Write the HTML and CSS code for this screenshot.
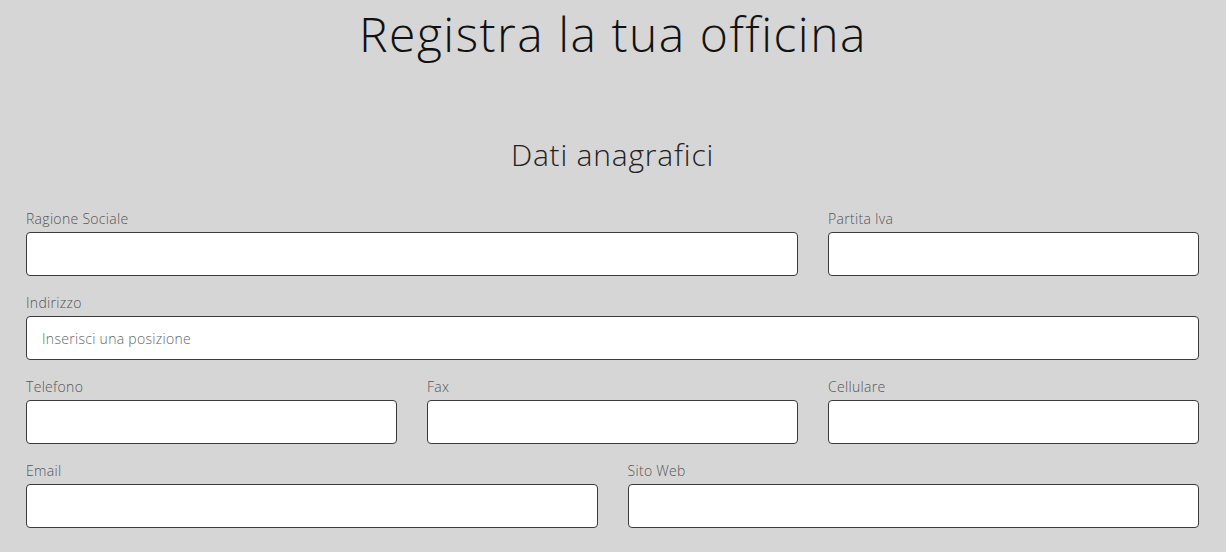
FILE: index.html
```html
<!DOCTYPE html>
<html lang="it">
<head>
    <meta charset="UTF-8">
    <meta name="viewport" content="width=device-width, initial-scale=1.0">
    <title>Registra la tua officina</title>
    <link rel="stylesheet" href="styles.css">
</head>
<body>

    <h1 class="title">Registra la tua officina</h1>

    <form class="form">
        <h2 class="section-title">Dati anagrafici</h2>

        <div class="row">
            <div class="field span-8">
                <label for="ragione">Ragione Sociale</label>
                <input type="text" id="ragione">
            </div>
            <div class="field span-4">
                <label for="piva">Partita Iva</label>
                <input type="text" id="piva">
            </div>

            <div class="field span-12">
                <label for="indirizzo">Indirizzo</label>
                <input type="text" id="indirizzo" placeholder="Inserisci una posizione">
            </div>

            <div class="field span-4">
                <label for="telefono">Telefono</label>
                <input type="text" id="telefono">
            </div>
            <div class="field span-4">
                <label for="fax">Fax</label>
                <input type="text" id="fax">
            </div>
            <div class="field span-4">
                <label for="cellulare">Cellulare</label>
                <input type="text" id="cellulare">
            </div>

            <div class="field span-6">
                <label for="email">Email</label>
                <input type="email" id="email">
            </div>
            <div class="field span-6">
                <label for="sito">Sito Web</label>
                <input type="text" id="sito">
            </div>
        </div>
    </form>

</body>
</html>
```

FILE: styles.css
```css
body {
    margin: 0;
    background: #d6d6d6;
    font-family: "Open Sans", sans-serif;
    font-weight: 300;
    color: #222;
}
.title {
    margin: 0;
    padding-top: 2px;
    text-align: center;
    font-size: 48px;
    font-weight: 300;
    line-height: 64px;
    letter-spacing: 1.5px;
    color: #111;
}
.form {
    padding: 0 27px 0 26px;
}
.section-title {
    margin: 69px 0 0;
    text-align: center;
    font-size: 30px;
    font-weight: 300;
    line-height: 40px;
    letter-spacing: 0.8px;
    color: #222;
}
.row {
    display: grid;
    grid-template-columns: repeat(12, 1fr);
    column-gap: 30px;
    row-gap: 17px;
    margin-top: 34px;
}
.span-4 { grid-column: span 4; }
.span-6 { grid-column: span 6; }
.span-8 { grid-column: span 8; }
.span-12 { grid-column: span 12; }
.field label {
    display: block;
    font-size: 14px;
    line-height: 20px;
    letter-spacing: 0.3px;
    margin-bottom: 3px;
    color: #555;
}
.field input {
    display: block;
    box-sizing: border-box;
    width: 100%;
    height: 44px;
    padding: 0 15px;
    background: #fff;
    border: 1px solid #3a3a3a;
    border-radius: 4px;
    font-family: "Open Sans", sans-serif;
    font-weight: 300;
    font-size: 14px;
    letter-spacing: 0.3px;
    color: #333;
}
.field input::placeholder {
    color: #666;
}
```
